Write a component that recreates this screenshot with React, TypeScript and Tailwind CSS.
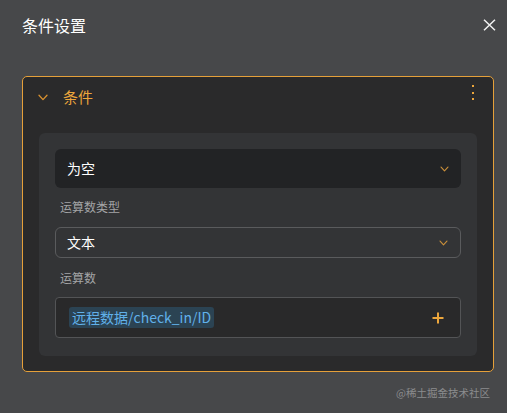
import type { ReactNode } from "react";

const orange = "#eca63c";

function Chevron({ className = "", color = orange }: { className?: string; color?: string }) {
  return (
    <svg className={className} width="10" height="7" viewBox="0 0 10 7" fill="none">
      <path d="M1 1.2L5 5.6L9 1.2" stroke={color} strokeWidth="1.3" strokeLinecap="round" strokeLinejoin="round" />
    </svg>
  );
}

function Label({ children }: { children: ReactNode }) {
  return <div className="px-[5px] text-[12px] leading-[17px] text-[#a4a5a7]">{children}</div>;
}

export default function App() {
  return (
    <div className="w-[507px] h-[413px] bg-[#47484a] flex flex-col font-['Noto_Sans_CJK_SC','Noto_Sans',sans-serif] overflow-hidden">
      <header className="h-[50px] flex items-center justify-between pl-[22px] pr-[11px]">
        <span className="text-[16px] text-white leading-none">条件设置</span>
        <svg width="13" height="12" viewBox="0 0 13 12" fill="none">
          <path d="M1 0.8L12 11.2M12 0.8L1 11.2" stroke="#f2f2f2" strokeWidth="1.5" />
        </svg>
      </header>

      <section className="mt-[26px] ml-[22px] mr-[13px] h-[296px] rounded-[5px] border border-[#e5a03a] bg-[#2a2a2b] flex flex-col">
        <div className="h-[56px] flex items-start justify-between pl-[15px] pr-[19px]">
          <div className="flex items-center gap-[15px] mt-[10px]">
            <Chevron color="#d8912f" />
            <span className="text-[15px] leading-[20px]" style={{ color: orange }}>
              条件
            </span>
          </div>
          <div className="mt-[8px] flex flex-col gap-[4.5px]">
            <span className="w-[2px] h-[2px] bg-[#eca63c]" />
            <span className="w-[2px] h-[2px] bg-[#eca63c]" />
            <span className="w-[2px] h-[2px] bg-[#eca63c]" />
          </div>
        </div>

        <div className="mx-[16px] h-[223px] rounded-[6px] bg-[#333436] p-[16px] flex flex-col">
          <div className="h-[39px] rounded-[6px] bg-[#222325] flex items-center justify-between pl-[12px] pr-[12px]">
            <span className="text-[14px] text-white">为空</span>
            <Chevron className="w-[9px] h-[6px]" color="#c98f3a" />
          </div>

          <div className="mt-[10px] mb-[12px]">
            <Label>运算数类型</Label>
          </div>

          <div className="h-[31px] rounded-[6px] border border-[#5a5b5d] flex items-center justify-between pl-[11px] pr-[12px]">
            <span className="text-[14px] text-white">文本</span>
            <Chevron className="w-[9px] h-[6px]" color="#c98f3a" />
          </div>

          <div className="mt-[11px] mb-[11px]">
            <Label>运算数</Label>
          </div>

          <div className="h-[41px] rounded-[4px] border border-[#535456] bg-[#29292a] flex items-center justify-between pl-[13px] pr-[16px]">
            <span className="rounded-[3px] bg-[#2b4353] px-[3px] text-[14px] leading-[21px] text-[#61b1ea]">
              远程数据/check_in/ID
            </span>
            <svg width="12" height="12" viewBox="0 0 12 12" fill="none">
              <path d="M6 0.5V11.5M0.5 6H11.5" stroke={orange} strokeWidth="2" />
            </svg>
          </div>
        </div>
      </section>

      <div className="flex justify-end pr-[17px] mt-[16px]">
        <span className="text-[10.5px] text-[#8b8c8e] leading-none">@稀土掘金技术社区</span>
      </div>
    </div>
  );
}
